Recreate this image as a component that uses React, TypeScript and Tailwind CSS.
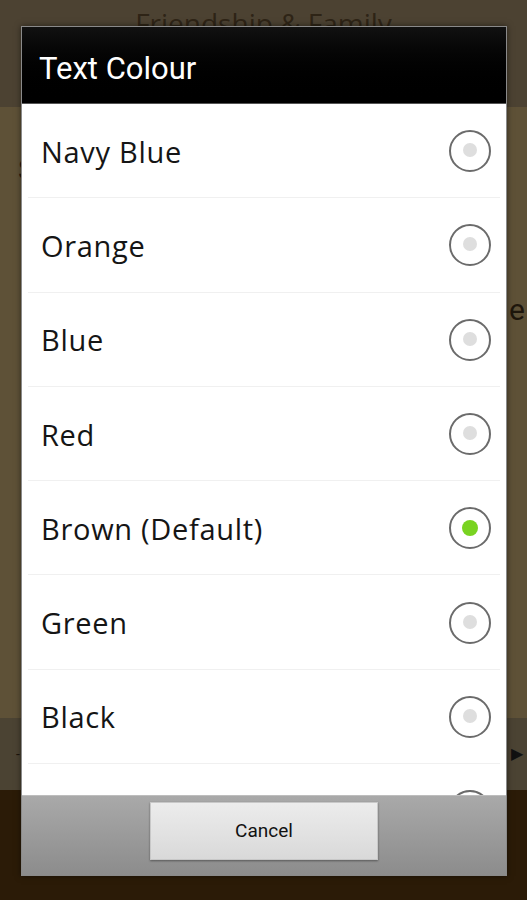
import React from "react";

const items = ["Navy Blue", "Orange", "Blue", "Red", "Brown (Default)", "Green", "Black", ""];

function Radio({ checked }: { checked: boolean }) {
  return (
    <svg width="44" height="44" viewBox="0 0 44 44">
      <circle cx="22" cy="22" r="20" fill="#fff" stroke="#6b6b6b" strokeWidth="2" />
      {checked ? (
        <circle cx="22" cy="22" r="8" fill="#79d321" />
      ) : (
        <circle cx="22" cy="21" r="7" fill="#dedede" />
      )}
    </svg>
  );
}

export default function App() {
  return (
    <div className="relative w-[527px] h-[900px] overflow-hidden" style={{ fontFamily: "Roboto, 'Noto Sans', sans-serif" }}>
      {/* dimmed background app */}
      <div className="flex flex-col h-full">
        <div className="h-[107px] bg-[#4c4232] flex justify-center pt-[2px]">
          <span className="text-[28px] text-[#2e2416]" style={{ fontFamily: "'Open Sans', sans-serif" }}>Friendship &amp; Family</span>
        </div>
        <div className="flex-1 bg-[#5e5137] flex justify-between items-start">
          <span className="text-[30px] text-[#1e160c] mt-[40px] ml-[18px]">S</span>
          <span className="text-[30px] text-[#1e160c] mt-[180px] mr-[2px]">e</span>
        </div>
        <div className="h-[72px] bg-[#4b4333] flex items-center justify-between">
          <span className="ml-[16px] text-[#1e160c] text-[14px]">-</span>
          <span className="mr-[4px] text-[#111] text-[16px]">▶</span>
        </div>
        <div className="h-[110px] bg-[#2b1b07]" />
      </div>

      {/* dialog */}
      <div className="absolute left-[21px] top-[26px] w-[486px] border border-[#8a8a8a] shadow-[0_0_6px_rgba(0,0,0,0.5)] flex flex-col">
        <div className="h-[77px] bg-gradient-to-b from-[#111] to-[#000] flex items-center pl-[17px] border-b border-[#555]">
          <span className="text-white text-[31px] leading-none mt-[6px]">Text Colour</span>
        </div>
        <div className="h-[691px] bg-white overflow-hidden flex flex-col">
          {items.map((it, i) => (
            <div key={i} className="shrink-0 h-[94.3px] flex items-center justify-between pl-[19px] pr-[14px] relative">
              <span className="text-[29px] tracking-[0.7px] text-[#151515] leading-none" style={{ fontFamily: "'Open Sans', sans-serif" }}>{it}</span>
              <Radio checked={i === 4} />
              <div className="absolute bottom-0 left-[6px] right-[6px] h-px bg-[#f0f0f0]" />
            </div>
          ))}
        </div>
        <div className="h-[80px] bg-gradient-to-b from-[#a9a9a9] to-[#8c8c8c] border-t border-[#bdbdbd] flex justify-center pt-[6px]">
          <div className="w-[228px] h-[58px] bg-gradient-to-b from-[#ececec] to-[#d9d9d9] border border-[#c8c8c8] shadow-[0_1px_2px_rgba(0,0,0,0.4)] flex items-center justify-center">
            <span className="text-[19px] text-[#111]">Cancel</span>
          </div>
        </div>
      </div>
    </div>
  );
}
